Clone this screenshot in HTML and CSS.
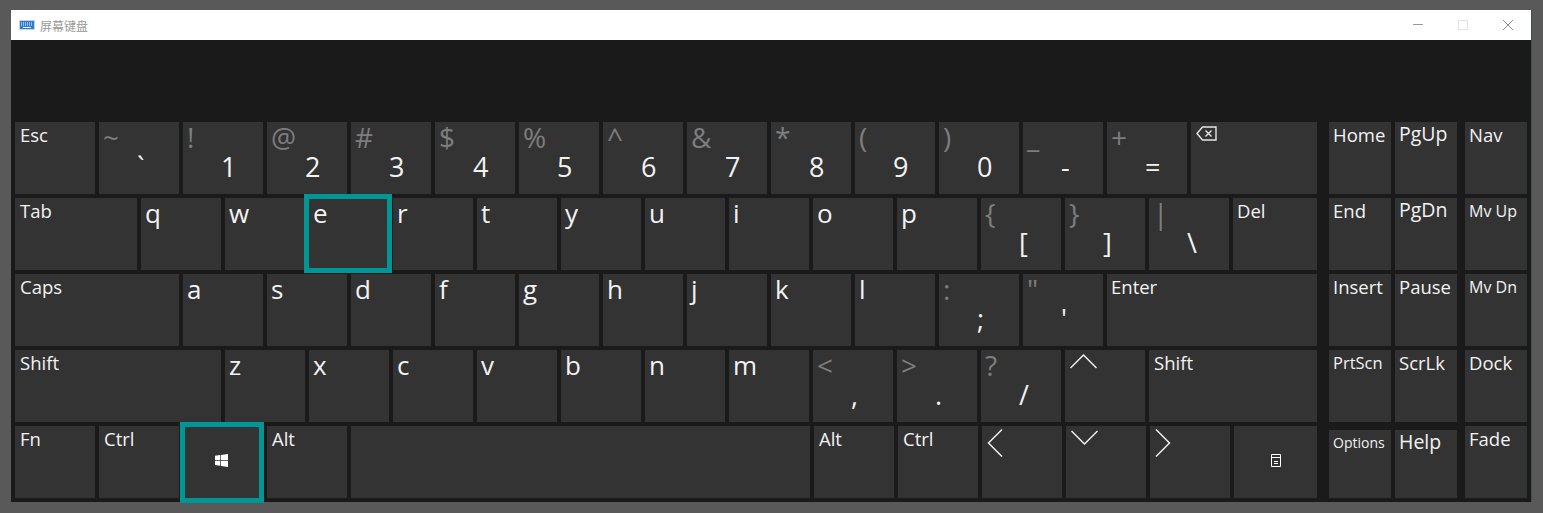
FILE: index.html
```html
<!DOCTYPE html>
<html>

<head>
    <meta charset="utf-8">
    <title>屏幕键盘</title>
    <link rel="stylesheet" href="styles.css">
</head>

<body>
    <div class="window">
        <div class="titlebar">
            <svg class="app-icon" width="16" height="10" viewBox="0 0 16 10">
                <rect x="0" y="0" width="16" height="10" fill="#c9d3dc"/>
                <rect x="1" y="1" width="14" height="8" fill="#2b7cd3"/>
                <path d="M2 3h12M2 5h12" stroke="#fff" stroke-width="1" stroke-dasharray="1 1"/>
                <path d="M4 7.5h8" stroke="#fff" stroke-width="1"/>
            </svg>
            <span class="title">屏幕键盘</span>
            <div class="controls">
                <div class="control">
                    <svg width="10" height="10" viewBox="0 0 10 10"><path d="M0 4.5h10" stroke="#999" fill="none"/></svg>
                </div>
                <div class="control">
                    <svg width="10" height="10" viewBox="0 0 10 10"><rect x=".5" y=".5" width="9" height="9" stroke="#e3e3e3" fill="none"/></svg>
                </div>
                <div class="control">
                    <svg width="10" height="10" viewBox="0 0 10 10"><path d="M0 0l10 10M10 0L0 10" stroke="#8a8a8a" fill="none"/></svg>
                </div>
            </div>
        </div>

        <div class="keyboard">
            <div class="main-keys">
                <div class="row">
                    <div class="key"><span class="label">Esc</span></div>
                    <div class="key"><span class="shift">~</span><span class="main">`</span></div>
                    <div class="key"><span class="shift">!</span><span class="main">1</span></div>
                    <div class="key"><span class="shift">@</span><span class="main">2</span></div>
                    <div class="key"><span class="shift">#</span><span class="main">3</span></div>
                    <div class="key"><span class="shift">$</span><span class="main">4</span></div>
                    <div class="key"><span class="shift">%</span><span class="main">5</span></div>
                    <div class="key"><span class="shift">^</span><span class="main">6</span></div>
                    <div class="key"><span class="shift">&amp;</span><span class="main">7</span></div>
                    <div class="key"><span class="shift">*</span><span class="main">8</span></div>
                    <div class="key"><span class="shift">(</span><span class="main">9</span></div>
                    <div class="key"><span class="shift">)</span><span class="main">0</span></div>
                    <div class="key"><span class="shift">_</span><span class="main">-</span></div>
                    <div class="key"><span class="shift">+</span><span class="main">=</span></div>
                    <div class="key bksp">
                        <svg class="bksp-icon" width="21" height="15" viewBox="0 0 21 15">
                            <path d="M20 1H6.5L1 7.5 6.5 14H20z" fill="none" stroke="#e6e6e6" stroke-width="1.4"/>
                            <path d="M9.5 4.5l6 6M15.5 4.5l-6 6" fill="none" stroke="#e6e6e6" stroke-width="1.4"/>
                        </svg>
                    </div>
                </div>
                <div class="row">
                    <div class="key tab"><span class="label">Tab</span></div>
                    <div class="key"><span class="letter">q</span></div>
                    <div class="key"><span class="letter">w</span></div>
                    <div class="key focus-e"><span class="letter">e</span></div>
                    <div class="key"><span class="letter">r</span></div>
                    <div class="key"><span class="letter">t</span></div>
                    <div class="key"><span class="letter">y</span></div>
                    <div class="key"><span class="letter">u</span></div>
                    <div class="key"><span class="letter">i</span></div>
                    <div class="key"><span class="letter">o</span></div>
                    <div class="key"><span class="letter">p</span></div>
                    <div class="key"><span class="shift">{</span><span class="main">[</span></div>
                    <div class="key"><span class="shift">}</span><span class="main">]</span></div>
                    <div class="key"><span class="shift">|</span><span class="main">\</span></div>
                    <div class="key del"><span class="label">Del</span></div>
                </div>
                <div class="row">
                    <div class="key caps"><span class="label">Caps</span></div>
                    <div class="key"><span class="letter">a</span></div>
                    <div class="key"><span class="letter">s</span></div>
                    <div class="key"><span class="letter">d</span></div>
                    <div class="key"><span class="letter">f</span></div>
                    <div class="key"><span class="letter">g</span></div>
                    <div class="key"><span class="letter">h</span></div>
                    <div class="key"><span class="letter">j</span></div>
                    <div class="key"><span class="letter">k</span></div>
                    <div class="key"><span class="letter">l</span></div>
                    <div class="key"><span class="shift">:</span><span class="main">;</span></div>
                    <div class="key"><span class="shift">"</span><span class="main">'</span></div>
                    <div class="key enter"><span class="label">Enter</span></div>
                </div>
                <div class="row">
                    <div class="key lshift"><span class="label">Shift</span></div>
                    <div class="key"><span class="letter">z</span></div>
                    <div class="key"><span class="letter">x</span></div>
                    <div class="key"><span class="letter">c</span></div>
                    <div class="key"><span class="letter">v</span></div>
                    <div class="key"><span class="letter">b</span></div>
                    <div class="key"><span class="letter">n</span></div>
                    <div class="key"><span class="letter">m</span></div>
                    <div class="key"><span class="shift">&lt;</span><span class="main">,</span></div>
                    <div class="key"><span class="shift">&gt;</span><span class="main">.</span></div>
                    <div class="key"><span class="shift">?</span><span class="main">/</span></div>
                    <div class="key">
                        <svg class="arrow arrow-v" width="27" height="15" viewBox="0 0 27 15"><path d="M.5 14L13.5 1l13 13" fill="none" stroke="#eee" stroke-width="1.5"/></svg>
                    </div>
                    <div class="key rshift"><span class="label">Shift</span></div>
                </div>
                <div class="row">
                    <div class="key"><span class="label">Fn</span></div>
                    <div class="key"><span class="label">Ctrl</span></div>
                    <div class="key icon-key focus-win">
                        <svg class="win-icon" width="13" height="13" viewBox="0 0 13 13"><path d="M0 1.8l5.3-.8v5H0zM6 .9L13 0v6H6zM0 6.8h5.3v5L0 11zM6 6.8h7V13l-7-1z" fill="#fff"/></svg>
                    </div>
                    <div class="key"><span class="label">Alt</span></div>
                    <div class="key space"></div>
                    <div class="key"><span class="label">Alt</span></div>
                    <div class="key"><span class="label">Ctrl</span></div>
                    <div class="key">
                        <svg class="arrow arrow-h" width="16" height="28" viewBox="0 0 16 28"><path d="M15 .5L1.5 14 15 27.5" fill="none" stroke="#eee" stroke-width="1.5"/></svg>
                    </div>
                    <div class="key">
                        <svg class="arrow arrow-v" width="27" height="15" viewBox="0 0 27 15"><path d="M.5 1l13 13 13-13" fill="none" stroke="#eee" stroke-width="1.5"/></svg>
                    </div>
                    <div class="key">
                        <svg class="arrow arrow-h" width="16" height="28" viewBox="0 0 16 28"><path d="M1 .5L14.5 14 1 27.5" fill="none" stroke="#eee" stroke-width="1.5"/></svg>
                    </div>
                    <div class="key icon-key menu">
                        <svg width="10" height="13" viewBox="0 0 10 13"><path d="M.5 .5h9v12h-9zM.5 3.5h9M3 7.5h4M3 9.5h4" fill="none" stroke="#fff" stroke-width="1"/></svg>
                    </div>
                </div>
            </div>

            <div class="side-keys">
                <div class="row">
                    <div class="key side"><span class="label">Home</span></div>
                    <div class="key side"><span class="label big">PgUp</span></div>
                    <div class="key side nav"><span class="label">Nav</span></div>
                </div>
                <div class="row">
                    <div class="key side"><span class="label">End</span></div>
                    <div class="key side"><span class="label big">PgDn</span></div>
                    <div class="key side nav"><span class="label small">Mv Up</span></div>
                </div>
                <div class="row">
                    <div class="key side"><span class="label">Insert</span></div>
                    <div class="key side"><span class="label">Pause</span></div>
                    <div class="key side nav"><span class="label small">Mv Dn</span></div>
                </div>
                <div class="row">
                    <div class="key side"><span class="label small wide">PrtScn</span></div>
                    <div class="key side"><span class="label">ScrLk</span></div>
                    <div class="key side nav"><span class="label">Dock</span></div>
                </div>
                <div class="row">
                    <div class="key side short"><span class="label tiny">Options</span></div>
                    <div class="key side short"><span class="label big">Help</span></div>
                    <div class="key side nav"><span class="label">Fade</span></div>
                </div>
            </div>
        </div>
    </div>
</body>

</html>
```
FILE: styles.css
```css
html, body {
    margin: 0;
    height: 100%;
}

body {
    background-color: #595959;
    overflow: hidden;
    padding: 10px 0 0 11px;
    box-sizing: border-box;
    font-family: "Open Sans", "Noto Sans", sans-serif;
}

.window {
    width: 1520px;
    height: 492px;
    background-color: #1a1a1a;
    box-shadow: 1px 0 0 #434d58;
}

/* title bar */
.titlebar {
    height: 30px;
    background-color: #fff;
    display: flex;
    align-items: center;
    padding-left: 8px;
}

.app-icon {
    margin-right: 5px;
}

.title {
    font-family: "Noto Sans CJK SC", sans-serif;
    font-size: 12px;
    color: #9a9a9a;
}

.controls {
    display: flex;
    margin-left: auto;
}

.control {
    width: 45px;
    height: 30px;
    display: flex;
    align-items: center;
    justify-content: center;
}

.control:last-child {
    width: 46px;
}

/* keys */
.keyboard {
    display: flex;
    padding: 82px 0 0 4px;
}

.main-keys,
.side-keys {
    display: flex;
    flex-direction: column;
    gap: 4px;
}

.side-keys {
    margin-left: 12px;
}

.row {
    display: flex;
    gap: 4px;
}

.key {
    width: 80px;
    height: 72px;
    background-color: #333;
    color: #f2f2f2;
    display: flex;
    flex-direction: column;
    align-items: flex-start;
    padding-left: 5px;
    box-sizing: border-box;
    position: relative;
}

.bksp { width: 126px; }
.tab { width: 122px; }
.del { width: 84px; padding-left: 4px; }
.caps { width: 164px; }
.enter { width: 210px; padding-left: 4px; }
.lshift { width: 206px; }
.rshift { width: 168px; }
.space { width: 459px; }
.menu { width: 83px; }
.side { width: 62px; padding-left: 4px; }
.nav { margin-left: 4px; }

.short {
    height: 68px;
    align-self: flex-end;
}

.label {
    font-size: 18.5px;
    line-height: 24px;
    padding-top: 1px;
}

.label.big { font-size: 19.5px; padding-top: 0; }
.label.small { font-size: 16px; }
.label.small.wide { font-size: 16.5px; }
.label.tiny { font-size: 14px; }

.letter {
    font-size: 26px;
    line-height: 30px;
    margin-left: -1px;
}

.shift {
    font-size: 28px;
    line-height: 28px;
    height: 28px;
    margin-top: 1px;
    margin-left: -1px;
    color: #7d7d7d;
}

.main {
    font-size: 27px;
    line-height: 30px;
    margin-top: 1px;
    padding-left: 33px;
}

.icon-key {
    align-items: center;
    justify-content: center;
    padding: 0 0 3px;
}

.win-icon {
    margin-right: 3px;
}

.arrow-v {
    margin-top: 4px;
}

.arrow-h {
    margin-top: 3px;
}

.bksp-icon {
    margin-top: 4px;
}

.focus-e::after,
.focus-win::after {
    content: "";
    position: absolute;
    border: 5px solid #009696;
}

.focus-e::after {
    left: -5px;
    right: -3px;
    top: -4px;
    bottom: -3px;
}

.focus-win::after {
    left: -3px;
    right: -1px;
    top: -4px;
    bottom: -5px;
}
```
